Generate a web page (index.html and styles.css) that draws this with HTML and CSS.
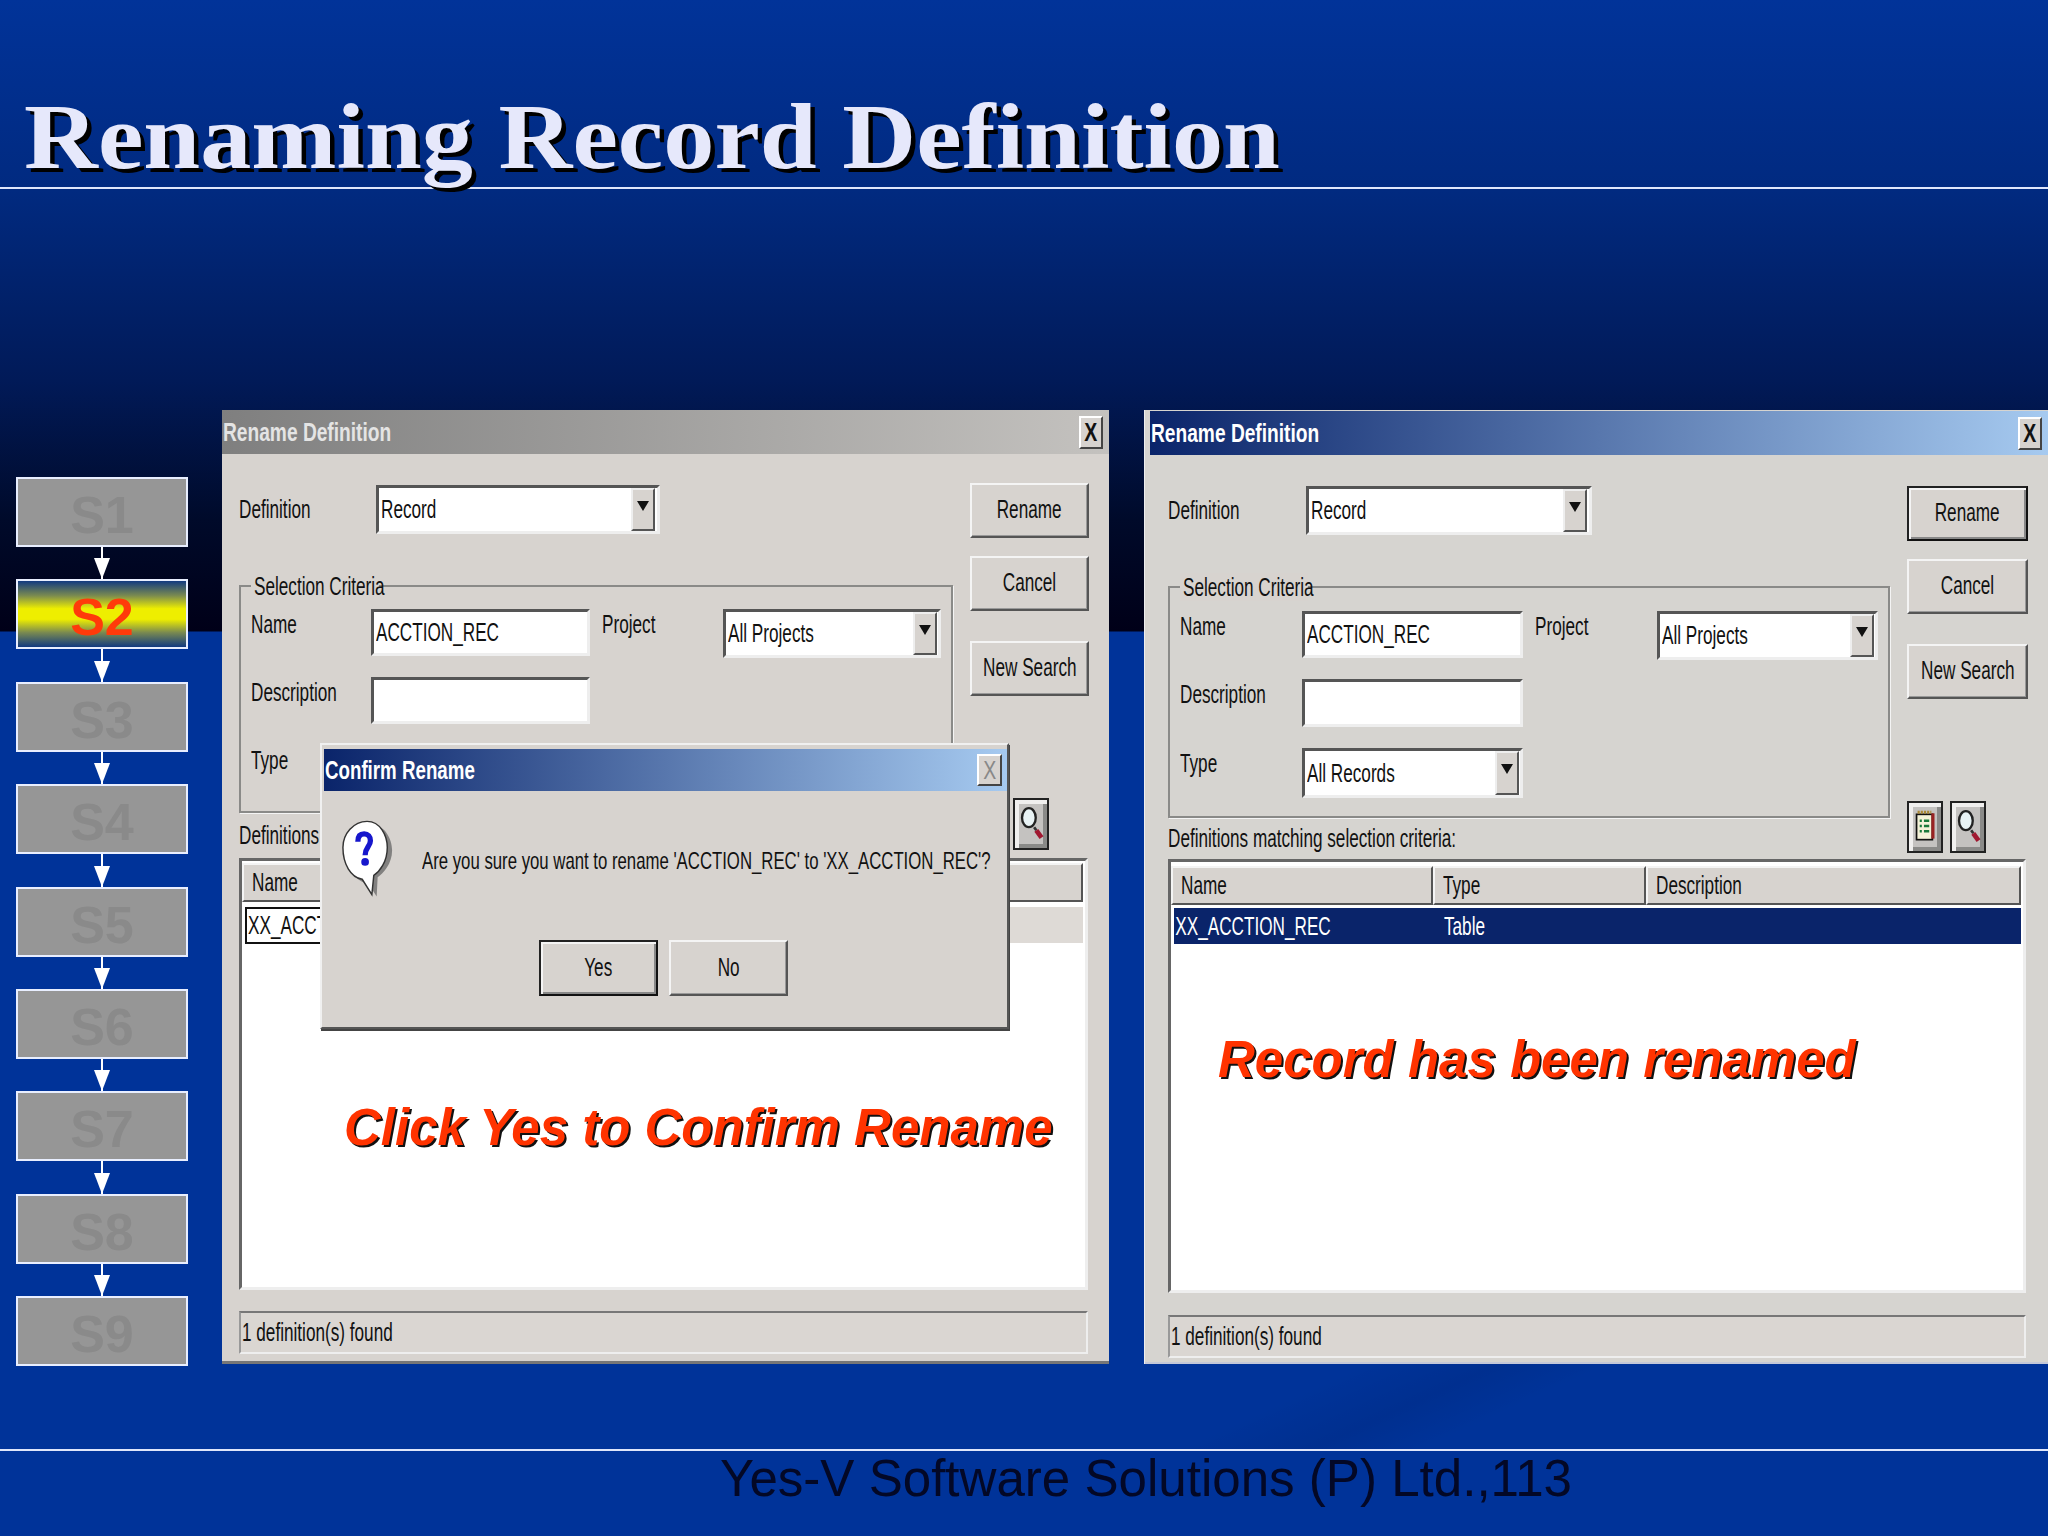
FILE: index.html
```html
<!DOCTYPE html>
<html lang="en">
<head>
<meta charset="utf-8">
<title>Renaming Record Definition</title>
<link rel="stylesheet" href="styles.css">
</head>
<body>
<main class="slide">
  <header class="head"><h1 class="title">Renaming Record Definition</h1></header>
  <section class="stage">
    <ol class="steps">
      <li class="step">S1</li><li class="arrow"></li>
      <li class="step step-on">S2</li><li class="arrow"></li>
      <li class="step">S3</li><li class="arrow"></li>
      <li class="step">S4</li><li class="arrow"></li>
      <li class="step">S5</li><li class="arrow"></li>
      <li class="step">S6</li><li class="arrow"></li>
      <li class="step">S7</li><li class="arrow"></li>
      <li class="step">S8</li><li class="arrow"></li>
      <li class="step">S9</li>
    </ol>

    <div class="dlg dlg-a">
      <div class="bar bar-off"><span class="t">Rename Definition</span><span class="close"><span class="x">X</span></span></div>
      <div class="body">
        <div class="cols">
          <div class="left">
            <div class="defrow">
              <span class="lab t">Definition</span>
              <div class="field combo"><span class="t">Record</span><i class="drop"></i></div>
            </div>
            <div class="group">
              <span class="legend"><span class="t">Selection Criteria</span></span>
              <span class="lab t nudge">Name</span>
              <div class="field"><span class="t">ACCTION_REC</span></div>
              <span class="lab t nudge lab-proj">Project</span>
              <div class="field combo"><span class="t">All Projects</span><i class="drop"></i></div>
              <span class="lab t nudge">Description</span>
              <div class="field"></div>
              <span class="empty"></span><span class="empty"></span>
              <span class="lab t nudge">Type</span>
              <div class="field combo"><span class="t">All Records</span><i class="drop"></i></div>
            </div>
            <div class="matching"><span class="t">Definitions matching selection criteria:</span></div>
          </div>
          <div class="right">
            <div class="btn"><span class="t tc">Rename</span></div>
            <div class="btn"><span class="t tc">Cancel</span></div>
            <div class="btn btn-gap"><span class="t tc">New Search</span></div>
            <div class="tools">
              <div class="tool"><svg class="ico" viewBox="0 0 24 36"><rect x="4" y="6" width="15" height="24" fill="#f4f2d8" stroke="#111" stroke-width="1.6"/><rect x="18" y="5" width="3" height="24" fill="#922"/><path d="M5 4h13" stroke="#a83" stroke-width="3" stroke-dasharray="2 1"/><path d="M7 12h2M11 12h5M7 17h2M11 17h5M7 22h2M11 22h5" stroke="#1a7a3a" stroke-width="2.4"/></svg></div>
              <div class="tool"><svg class="ico" viewBox="0 0 24 36"><ellipse cx="10" cy="12" rx="6.500" ry="9" fill="#e8f2f4" stroke="#222" stroke-width="2.2"/><path d="M15 21l2 3" stroke="#333" stroke-width="2.5"/><path d="M17 24l5 7" stroke="#a01830" stroke-width="4.500"/></svg></div>
            </div>
          </div>
        </div>
        <div class="table">
          <div class="thead"><div class="th th-name"><span class="t">Name</span></div><div class="th th-type"><span class="t">Type</span></div><div class="th th-desc"><span class="t">Description</span></div></div>
          <div class="row row-idle"><div class="cell-focus"><span class="t">XX_ACCTION_REC</span></div><span class="t cell-type">Table</span></div>
        </div>
        <div class="status"><span class="t">1 definition(s) found</span></div>
      </div>
      <p class="note note-a">Click Yes to Confirm Rename</p>
      <div class="modal">
        <div class="bar bar-modal"><span class="t">Confirm Rename</span><span class="close close-off"><span class="x">X</span></span></div>
        <div class="ask">
          <svg class="balloon" viewBox="0 0 56 82"><path d="M31 5C45 5 53 20 53 32C53 46 44 56 38 60L37 80L28 66C16 66 6 50 6 32C6 18 16 5 31 5Z" fill="#666" opacity=".75"/><path d="M27 2C41 2 48 17 48 29C48 44 40 54 34 58L32 78L22 62C10 60 2 46 2 29C2 15 13 2 27 2Z" fill="#fff" stroke="#333" stroke-width="1.5"/><path d="M17.500 23C17.500 17 20.500 15 24 15C28 15 30.500 18 30.500 22C30.500 28 25 29 25 37" fill="none" stroke="#1616cc" stroke-width="5.500"/><circle cx="25" cy="44" r="4" fill="#1616cc"/></svg>
          <span class="t q">Are you sure you want to rename 'ACCTION_REC' to 'XX_ACCTION_REC'?</span>
        </div>
        <div class="choices">
          <div class="btn btn-default"><span class="t tc">Yes</span></div>
          <div class="btn"><span class="t tc">No</span></div>
        </div>
      </div>
    </div>

    <div class="dlg dlg-b">
      <div class="bar bar-on"><span class="t">Rename Definition</span><span class="close"><span class="x">X</span></span></div>
      <div class="body">
        <div class="cols">
          <div class="left">
            <div class="defrow">
              <span class="lab t">Definition</span>
              <div class="field combo"><span class="t">Record</span><i class="drop"></i></div>
            </div>
            <div class="group">
              <span class="legend"><span class="t">Selection Criteria</span></span>
              <span class="lab t nudge">Name</span>
              <div class="field"><span class="t">ACCTION_REC</span></div>
              <span class="lab t nudge lab-proj">Project</span>
              <div class="field combo"><span class="t">All Projects</span><i class="drop"></i></div>
              <span class="lab t nudge">Description</span>
              <div class="field"></div>
              <span class="empty"></span><span class="empty"></span>
              <span class="lab t nudge">Type</span>
              <div class="field combo"><span class="t">All Records</span><i class="drop"></i></div>
            </div>
            <div class="matching"><span class="t">Definitions matching selection criteria:</span></div>
          </div>
          <div class="right">
            <div class="btn btn-default"><span class="t tc">Rename</span></div>
            <div class="btn"><span class="t tc">Cancel</span></div>
            <div class="btn btn-gap"><span class="t tc">New Search</span></div>
            <div class="tools">
              <div class="tool"><svg class="ico" viewBox="0 0 24 36"><rect x="4" y="6" width="15" height="24" fill="#f4f2d8" stroke="#111" stroke-width="1.6"/><rect x="18" y="5" width="3" height="24" fill="#922"/><path d="M5 4h13" stroke="#a83" stroke-width="3" stroke-dasharray="2 1"/><path d="M7 12h2M11 12h5M7 17h2M11 17h5M7 22h2M11 22h5" stroke="#1a7a3a" stroke-width="2.4"/></svg></div>
              <div class="tool"><svg class="ico" viewBox="0 0 24 36"><ellipse cx="10" cy="12" rx="6.500" ry="9" fill="#e8f2f4" stroke="#222" stroke-width="2.2"/><path d="M15 21l2 3" stroke="#333" stroke-width="2.5"/><path d="M17 24l5 7" stroke="#a01830" stroke-width="4.500"/></svg></div>
            </div>
          </div>
        </div>
        <div class="table">
          <div class="thead"><div class="th th-name"><span class="t">Name</span></div><div class="th th-type"><span class="t">Type</span></div><div class="th th-desc"><span class="t">Description</span></div></div>
          <div class="row row-sel"><span class="t cell-name">XX_ACCTION_REC</span><span class="t cell-type">Table</span></div>
        </div>
        <div class="status"><span class="t">1 definition(s) found</span></div>
      </div>
      <p class="note note-b">Record has been renamed</p>
    </div>
  </section>
  <footer class="foot"><span class="foot-text">Yes-V Software Solutions (P) Ltd.,113</span></footer>
</main>
</body>
</html>
```
FILE: styles.css
```css
* { box-sizing: border-box; }
html, body { margin: 0; padding: 0; }
.slide {
  width: 2048px; height: 1536px; overflow: hidden;
  display: flex; flex-direction: column;
  font-family: "Liberation Sans", Arial, sans-serif;
  background-color: #003399;
  background-image:
    linear-gradient(155.6deg, transparent 61%, rgba(0, 0, 30, .08) 67%, transparent 72%),
    linear-gradient(180deg, #013399 0, #012a80 190px, #011a58 380px, #000a2a 520px, #000018 631px, #003399 632px, #003399 100%);
  background-size: 2048px 86px, 2048px 1536px;
  background-position: 0 1364px, 0 0;
  background-repeat: no-repeat;
}
.head { height: 189px; border-bottom: 2px solid #dfe6fb; padding-left: 24px; flex: none; }
.title {
  margin: 0; padding-top: 90px; font: bold 93px/1 "Liberation Serif", "Times New Roman", serif;
  color: #e6e8fb; text-shadow: 4px 4px 0 #000; white-space: nowrap; height: 189px;
  transform: scaleX(1.1); transform-origin: 0 50%;
}
.stage { display: flex; align-items: flex-start; padding-top: 221px; height: 1262px; flex: none; border-bottom: 2px solid #dfe6fb; }
.steps { list-style: none; margin: 67px 0 0 16px; padding: 0; width: 172px; flex: none; display: flex; flex-direction: column; align-items: center; }
.step {
  width: 172px; height: 70px; border: 2px solid #e8eeff; background: #969696; color: #8a8a8a;
  font-weight: bold; font-size: 52px; line-height: 72px; text-align: center;
}
.step-on {
  color: #ff3a0a;
  background: linear-gradient(180deg, #123a80 0, #7a8a50 22%, #eeee00 42%, #eeee00 58%, #7a8a50 78%, #123a80 100%);
}
.arrow { position: relative; width: 2px; height: 32.4px; background: #fff; }
.arrow::after { content: ""; position: absolute; left: -7px; bottom: 0; border: 8px solid transparent; border-top: 21px solid #fff; border-bottom: 0; }

.dlg { position: relative; flex: none; height: 954px; background: #d7d3cf; color: #111; font-size: 26px; box-shadow: inset 0 -3px 0 #777; }
.dlg-a { width: 887px; margin-left: 34px; }
.dlg-b { width: 904px; margin-left: 35px; background: #d6d4d0; padding: 1px 0 0 5px; border-left: 1px solid #eee; box-shadow: inset 0 -2px 0 #c4c8d8; }
.t { display: inline-block; white-space: nowrap; transform: scaleX(.66); transform-origin: 0 50%; }
.tc { transform-origin: 50% 50%; }
.bar { display: flex; align-items: center; justify-content: space-between; height: 44px; padding-left: 1px; color: #fff; font-weight: bold; overflow: hidden; }
.bar-off { background: linear-gradient(90deg, #7f7f7f, #c4c2bf); color: #e4e4e4; }
.bar-on, .bar-modal { background: linear-gradient(90deg, #0a246a, #a6caf0); }
.bar .t { transform: scaleX(.737); }
.bar-modal .t { transform: scaleX(.72); }
.close { flex: none; width: 24px; height: 33px; margin-right: 6px; background: #d7d3cf; border: 2px solid; border-color: #fff #444 #444 #fff; display: flex; align-items: center; justify-content: center; color: #111; font-weight: bold; }
.close-off { color: #888; font-weight: normal; width: 25px; height: 32px; margin-right: 5px; }
.x { display: inline-block; transform: scaleX(.75); }

.body { padding-left: 17px; }
.dlg-b .body { padding-left: 18px; }
.cols { display: flex; }
.left { width: 714px; flex: none; }
.dlg-b .left { width: 722px; }
.right { width: 119px; margin-left: 17px; padding-top: 29px; display: flex; flex-direction: column; gap: 18px; flex: none; }
.dlg-b .right { width: 121px; margin-left: 17px; padding-top: 31px; }
.defrow { display: flex; align-items: center; height: 49px; margin-top: 31px; }
.defrow .lab { width: 137px; }
.defrow .field { width: 284px; }
.dlg-b .defrow .lab { width: 138px; }
.dlg-b .defrow .field { width: 286px; }
.lab { flex: none; }
.field {
  position: relative; height: 100%; background: #fff; border: 3px solid; border-color: #555 #eee #eee #555;
  padding-left: 2px; display: flex; align-items: center; min-width: 0; overflow: hidden;
}
.combo { padding-right: 27px; }
.lab-proj + .combo { height: calc(100% + 2px); }
.drop { position: absolute; right: 1px; top: 0; bottom: 0; width: 24px; background: #d7d3cf; border: 2px solid; border-color: #eee #555 #555 #eee; }
.defrow .drop { right: 2px; }
.drop::after { content: ""; position: absolute; left: 4px; top: 11px; border: 6px solid transparent; border-top: 10px solid #111; border-bottom: 0; }

.group {
  position: relative; margin-top: 51px; height: 228px; padding: 22px 0 0 10px; border: 2px solid #8a8a88;
  box-shadow: 1px 1px 0 #f4f4f4; display: grid; grid-template-columns: 120px 219px 133px 218px; grid-template-rows: 47px 47px 47px; row-gap: 21px; align-items: stretch;
}
.dlg-b .group { height: 232px; padding: 23px 0 0 10px; grid-template-columns: 122px 221px 134px 221px; grid-template-rows: 47px 48px 50px; }
.legend { position: absolute; left: 10px; top: -15px; height: 28px; width: 128px; background: #d7d3cf; padding-left: 3px; line-height: 28px; }
.nudge { align-self: start; margin-top: -2px; line-height: 34px; }
.lab-proj { margin-left: 12px; }
.matching { height: 45px; display: flex; align-items: center; }
.dlg-b .matching { height: 41px; }
.btn {
  height: 55px; background: #d7d3cf; border: 2px solid; border-color: #f4f4f4 #555 #555 #f4f4f4;
  box-shadow: inset -1px -1px 0 #999; display: flex; align-items: center; justify-content: center; flex: none; padding-bottom: 2px;
}
.btn-gap { margin-top: 12px; }
.btn-default { border-color: #222 #111 #111 #222; box-shadow: inset 2px 2px 0 #f4f4f4, inset -2px -2px 0 #888; }
.tools { display: flex; gap: 7px; margin-top: 84px; justify-content: flex-start; }
.tool { width: 36px; height: 52px; border: 2px solid #222; background: #c4c2c0; box-shadow: inset 4px 4px 0 #f0efee, inset -4px -4px 0 #8a8a88; display: flex; align-items: center; justify-content: center; }
.ico { width: 26px; height: 38px; }

.table { height: 432px; width: 849px; background: #fff; border: 3px solid; border-color: #666 #eee #eee #666; padding: 2px 2px 0 0; }
.dlg-b .table { height: 434px; width: 858px; }
.thead { display: flex; height: 39px; }
.dlg-b .thead { margin-top: 2px; }
.th { background: #d7d3cf; border: 2px solid; border-color: #f4f4f4 #555 #555 #f4f4f4; padding-left: 8px; display: flex; align-items: center; }
.th-name { width: 262px; }
.th-type { width: 213px; }
.th-desc { flex: 1; }
.row { display: flex; align-items: center; height: 36px; margin-top: 5px; margin-left: 3px; }
.row-idle { background: #dedad6; }
.row-sel { background: #0a246a; color: #fff; margin-top: 3px; }
.cell-focus { width: 258px; height: 37px; background: #fff; color: #111; border: 2px solid #111; display: flex; align-items: center; padding-left: 1px; overflow: hidden; flex: none; }
.cell-name { width: 270px; padding-left: 2px; flex: none; }
.status { height: 43px; margin-top: 21px; width: 849px; border: 2px solid; border-color: #777 #eee #eee #999; display: flex; align-items: center; padding-left: 1px; background: #dad6d2; }
.dlg-b .status { width: 858px; margin-top: 22px; }

.note { position: absolute; margin: 0; font-weight: bold; font-style: italic; font-size: 51px; line-height: 60px; color: #ff3300; text-shadow: 2px 2px 0 #111; white-space: nowrap; }
.note-a { left: 122px; top: 688px; }
.note-b { left: 73px; top: 620px; }

.modal { position: absolute; left: 98px; top: 333px; width: 689px; height: 286px; background: #d7d3cf; border: 2px solid; border-color: #f0f0f0 #555 #555 #f0f0f0; padding: 4px 0 0 2px; box-shadow: 1px 2px 0 #444; }
.bar-modal { height: 42px; }
.ask { display: flex; align-items: flex-start; padding: 28px 0 0 17px; height: 148px; }
.balloon { width: 54px; height: 80px; flex: none; }
.q { margin: 28px 0 0 27px; transform: scaleX(.698); font-size: 24px; }
.choices { display: flex; gap: 11px; margin-left: 215px; margin-top: 1px; }
.choices .btn { width: 119px; height: 56px; }

.foot { flex: 1; padding-left: 720px; }
.foot-text { display: block; font-size: 51.1px; line-height: 55px; color: #030826; white-space: nowrap; }
```
